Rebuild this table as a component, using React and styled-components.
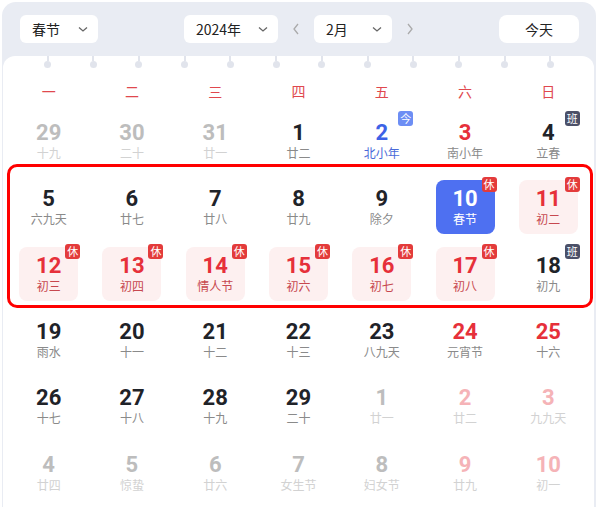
import React from "react";
import styled, { createGlobalStyle } from "styled-components";

const GlobalStyle = createGlobalStyle`
  html, body {
    margin: 0;
    padding: 0;
    background: #fff;
  }
  body {
    font-family: "Noto Sans CJK SC", "Noto Sans", sans-serif;
  }
`;

const Frame = styled.div`
  margin: 2px 2px 0 2px;
  height: 505px;
  box-sizing: border-box;
  padding: 0 2px 0 1px;
  background: #e9ecf3;
  border-radius: 14px 14px 0 0;
  display: flex;
  flex-direction: column;
`;

const Toolbar = styled.div`
  height: 54px;
  flex: none;
  display: flex;
  align-items: center;
  padding: 0 15px 0 17px;
`;

const Select = styled.div`
  width: ${({ w }) => w}px;
  height: 28px;
  box-sizing: border-box;
  padding: 0 9px 0 12px;
  background: #fff;
  border-radius: 6px;
  display: flex;
  align-items: center;
  justify-content: space-between;
  font-size: 14px;
  color: #222;
`;

const MidGroup = styled.div`
  display: flex;
  align-items: center;
  margin-left: 86px;
`;

const Arrow = styled.div`
  width: 24px;
  height: 28px;
  margin: 0 6px;
  display: flex;
  align-items: center;
  justify-content: center;
`;

const TodayBtn = styled.div`
  margin-left: auto;
  width: 80px;
  height: 28px;
  background: #fff;
  border-radius: 8px;
  display: flex;
  align-items: center;
  justify-content: center;
  font-size: 14px;
  color: #222;
`;

const Sheet = styled.div`
  flex: 1;
  background: #fff;
  border-radius: 12px 12px 0 0;
  padding: 0 4px;
`;

const Rings = styled.div`
  height: 12px;
  display: flex;
  justify-content: space-between;
  padding: 0 36px 0 37px;
`;

const Ring = styled.span`
  width: 7px;
  display: flex;
  flex-direction: column;
  align-items: center;
  &::before {
    content: "";
    width: 2px;
    height: 5px;
    background: #e1e4ec;
  }
  &::after {
    content: "";
    width: 7px;
    height: 7px;
    border-radius: 50%;
    background: #e1e4ec;
  }
`;

const WeekRow = styled.div`
  height: 40px;
  box-sizing: border-box;
  padding-top: 6px;
  display: grid;
  grid-template-columns: repeat(7, 1fr);
  line-height: 34px;
  font-size: 14px;
  color: #e0484e;
  text-align: center;
`;

const Days = styled.div`
  display: grid;
  grid-template-columns: repeat(7, 1fr);
  grid-auto-rows: 66.3px;
  position: relative;
  ${({ marked }) =>
    marked &&
    `
    &::after {
      content: "";
      position: absolute;
      top: -10px;
      bottom: -1px;
      left: 0;
      right: -3px;
      border: 3px solid #ff0000;
      border-radius: 10px;
      pointer-events: none;
    }
  `}
`;

const Cell = styled.div`
  display: flex;
  align-items: center;
  justify-content: center;
`;

const boxBg = { holiday: "#4e70f1", rest: "#fdf0f0" };

const Box = styled.div`
  position: relative;
  width: 59px;
  height: 54px;
  border-radius: 8px;
  background: ${({ kind }) => boxBg[kind] || "transparent"};
  display: flex;
  flex-direction: column;
  align-items: center;
  justify-content: center;
`;

const numColor = {
  normal: "#1f2329",
  dim: "#bdbdbd",
  dimRed: "#f5b3b7",
  red: "#e6303a",
  blue: "#3d62e6",
  white: "#fff",
};

const lunarColor = {
  normal: "#8a8a8a",
  dim: "#d2d2d2",
  dimRed: "#d2d2d2",
  red: "#8a8a8a",
  blue: "#4a6ad8",
  white: "#fff",
  pink: "#c7484f",
};

const Num = styled.div`
  font-family: Roboto, "Liberation Sans", sans-serif;
  font-size: 22px;
  font-weight: 700;
  line-height: 24px;
  color: ${({ tone }) => numColor[tone]};
`;

const Lunar = styled.div`
  font-size: 12px;
  line-height: 16px;
  color: ${({ tone }) => lunarColor[tone]};
`;

const badgeBg = { 休: "#e33b3b", 班: "#4b5068", 今: "#6d8ef4" };

const Badge = styled.span`
  position: absolute;
  top: -3px;
  right: -2px;
  width: 15px;
  height: 15px;
  border-radius: 3px;
  background: ${({ label }) => badgeBg[label]};
  color: #fff;
  font-size: 11px;
  line-height: 15px;
  text-align: center;
`;

const Chevron = () => (
  <svg width="12" height="12" viewBox="0 0 12 12">
    <polyline points="2,4.5 6,8 10,4.5" fill="none" stroke="#666" strokeWidth="1.3" />
  </svg>
);

const Side = ({ dir }) => (
  <svg width="10" height="14" viewBox="0 0 10 14">
    <polyline
      points={dir === "left" ? "7,2 3,7 7,12" : "3,2 7,7 3,12"}
      fill="none"
      stroke="#aaa"
      strokeWidth="1.3"
    />
  </svg>
);

const weekdays = ["一", "二", "三", "四", "五", "六", "日"];

const row = (...cells) => cells;
const c = (d, l, tone = "normal", extra = {}) => ({ d, l, tone, ...extra });

const firstRow = row(
  c(29, "十九", "dim"),
  c(30, "二十", "dim"),
  c(31, "廿一", "dim"),
  c(1, "廿二"),
  c(2, "北小年", "blue", { badge: "今" }),
  c(3, "南小年", "red"),
  c(4, "立春", "normal", { badge: "班" })
);

const markedRows = row(
  c(5, "六九天"),
  c(6, "廿七"),
  c(7, "廿八"),
  c(8, "廿九"),
  c(9, "除夕"),
  c(10, "春节", "white", { box: "holiday", badge: "休" }),
  c(11, "初二", "red", { box: "rest", badge: "休", lunar: "pink" }),
  c(12, "初三", "red", { box: "rest", badge: "休", lunar: "pink" }),
  c(13, "初四", "red", { box: "rest", badge: "休", lunar: "pink" }),
  c(14, "情人节", "red", { box: "rest", badge: "休", lunar: "pink" }),
  c(15, "初六", "red", { box: "rest", badge: "休", lunar: "pink" }),
  c(16, "初七", "red", { box: "rest", badge: "休", lunar: "pink" }),
  c(17, "初八", "red", { box: "rest", badge: "休", lunar: "pink" }),
  c(18, "初九", "normal", { badge: "班" })
);

const restRows = row(
  c(19, "雨水"),
  c(20, "十一"),
  c(21, "十二"),
  c(22, "十三"),
  c(23, "八九天"),
  c(24, "元宵节", "red"),
  c(25, "十六", "red"),
  c(26, "十七"),
  c(27, "十八"),
  c(28, "十九"),
  c(29, "二十"),
  c(1, "廿一", "dim"),
  c(2, "廿二", "dimRed"),
  c(3, "九九天", "dimRed"),
  c(4, "廿四", "dim"),
  c(5, "惊蛰", "dim"),
  c(6, "廿六", "dim"),
  c(7, "女生节", "dim"),
  c(8, "妇女节", "dim"),
  c(9, "廿九", "dimRed"),
  c(10, "初一", "dimRed")
);

function DayCell({ day }) {
  return (
    <Cell>
      <Box kind={day.box}>
        <Num tone={day.tone}>{day.d}</Num>
        <Lunar tone={day.lunar || day.tone}>{day.l}</Lunar>
        {day.badge && <Badge label={day.badge}>{day.badge}</Badge>}
      </Box>
    </Cell>
  );
}

export default function App() {
  return (
    <>
      <GlobalStyle />
      <Frame>
        <Toolbar>
          <Select w={78}>
            <span>春节</span>
            <Chevron />
          </Select>
          <MidGroup>
            <Select w={94}>
              <span>2024年</span>
              <Chevron />
            </Select>
            <Arrow>
              <Side dir="left" />
            </Arrow>
            <Select w={78}>
              <span>2月</span>
              <Chevron />
            </Select>
            <Arrow>
              <Side dir="right" />
            </Arrow>
          </MidGroup>
          <TodayBtn>今天</TodayBtn>
        </Toolbar>
        <Sheet>
          <Rings>
            {Array.from({ length: 12 }, (_, i) => (
              <Ring key={i} />
            ))}
          </Rings>
          <WeekRow>
            {weekdays.map((w) => (
              <span key={w}>{w}</span>
            ))}
          </WeekRow>
          <Days>
            {firstRow.map((d, i) => (
              <DayCell key={i} day={d} />
            ))}
          </Days>
          <Days marked>
            {markedRows.map((d, i) => (
              <DayCell key={i} day={d} />
            ))}
          </Days>
          <Days>
            {restRows.map((d, i) => (
              <DayCell key={i} day={d} />
            ))}
          </Days>
        </Sheet>
      </Frame>
    </>
  );
}
